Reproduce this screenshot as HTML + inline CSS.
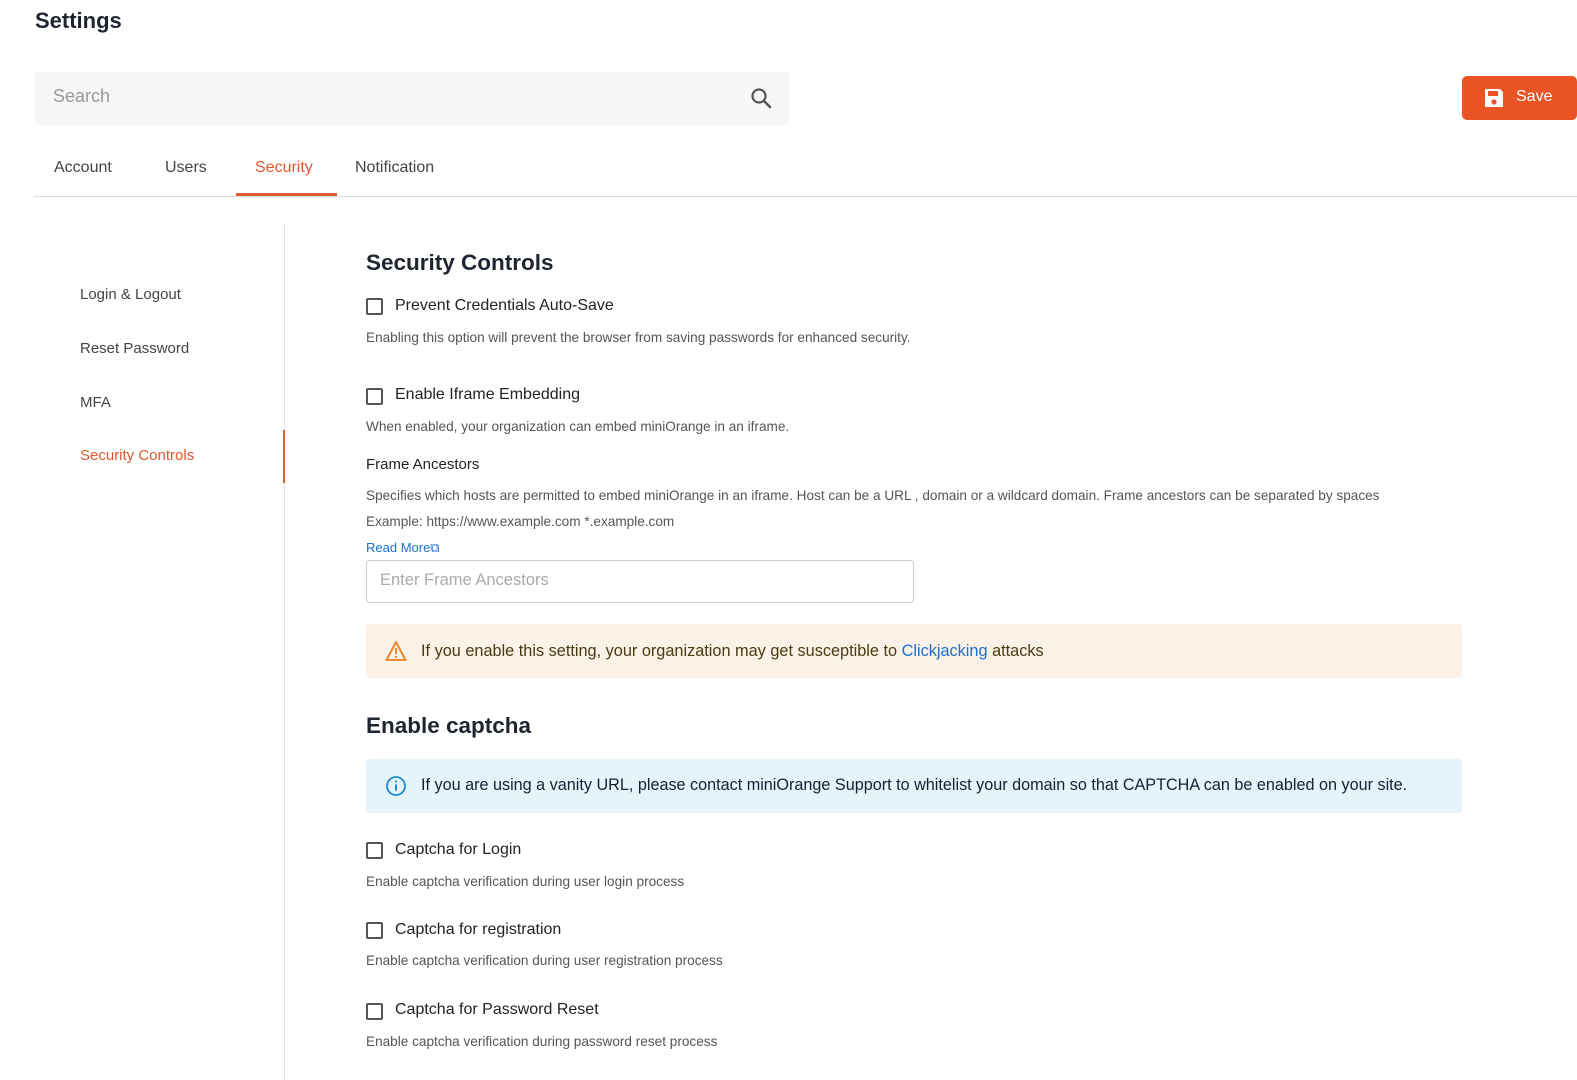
<!DOCTYPE html>
<html><head><meta charset="utf-8"><style>
*{box-sizing:border-box;margin:0;padding:0}
body{width:1577px;height:1080px;background:#fff;font-family:"Liberation Sans",sans-serif;color:#222;position:relative;overflow:hidden}
.a{position:absolute;white-space:nowrap}
.cb{position:absolute;width:17px;height:17px;border:2px solid #555;border-radius:2px;background:#fff}
.lbl{font-size:16px;color:#222}
.desc{font-size:13.6px;color:#555}
</style></head><body>
<div class="a" style="left:35px;top:8px;font-size:22px;font-weight:bold;color:#1e2430">Settings</div>
<div class="a" style="left:35px;top:72px;width:754px;height:53px;background:#f6f6f6;border-radius:4px"></div>
<div class="a" style="left:53px;top:86px;font-size:18px;color:#999">Search</div>
<svg class="a" style="left:749px;top:86px" width="24" height="24" viewBox="0 0 24 24"><circle cx="10" cy="10" r="6.5" fill="none" stroke="#555" stroke-width="2.2"/><path d="M15 15l6 6" stroke="#555" stroke-width="2.5" stroke-linecap="round"/></svg>
<div class="a" style="left:1462px;top:76px;width:115px;height:44px;background:#ea5424;border-radius:5px"></div>
<svg class="a" style="left:1482px;top:86px" width="24" height="24" viewBox="0 0 24 24"><path d="M3 3h15l3 3v15H3z" fill="#fff"/><rect x="6" y="5" width="10" height="5" fill="#ea5424"/><circle cx="12" cy="16" r="2.6" fill="#ea5424"/></svg>
<div class="a" style="left:1516px;top:88px;font-size:16px;color:#fff">Save</div>

<div class="a" style="left:54px;top:159px;font-size:16px;color:#444">Account</div>
<div class="a" style="left:165px;top:159px;font-size:16px;color:#444">Users</div>
<div class="a" style="left:255px;top:159px;font-size:16px;color:#e05a30">Security</div>
<div class="a" style="left:355px;top:159px;font-size:16px;color:#444">Notification</div>
<div class="a" style="left:34px;top:196px;width:1543px;height:1px;background:#ddd"></div>
<div class="a" style="left:236px;top:193px;width:101px;height:3px;background:#e05a30"></div>

<div class="a" style="left:284px;top:224px;width:1px;height:856px;background:#e2e2e2"></div>
<div class="a" style="left:283px;top:430px;width:2px;height:53px;background:#e05a30"></div>
<div class="a" style="left:80px;top:286px;font-size:15px;color:#444">Login &amp; Logout</div>
<div class="a" style="left:80px;top:340px;font-size:15px;color:#444">Reset Password</div>
<div class="a" style="left:80px;top:394px;font-size:15px;color:#444">MFA</div>
<div class="a" style="left:80px;top:447px;font-size:15px;color:#e05a30">Security Controls</div>

<div class="a" style="left:366px;top:250px;font-size:22.5px;font-weight:bold;color:#1e2430">Security Controls</div>
<div class="cb" style="left:366px;top:298px"></div>
<div class="a lbl" style="left:395px;top:297px">Prevent Credentials Auto-Save</div>
<div class="a desc" style="left:366px;top:330px">Enabling this option will prevent the browser from saving passwords for enhanced security.</div>
<div class="cb" style="left:366px;top:388px"></div>
<div class="a lbl" style="left:395px;top:386px">Enable Iframe Embedding</div>
<div class="a desc" style="left:366px;top:419px">When enabled, your organization can embed miniOrange in an iframe.</div>
<div class="a" style="left:366px;top:456px;font-size:15px;color:#222">Frame Ancestors</div>
<div class="a desc" style="left:366px;top:488px">Specifies which hosts are permitted to embed miniOrange in an iframe. Host can be a URL , domain or a wildcard domain. Frame ancestors can be separated by spaces</div>
<div class="a desc" style="left:366px;top:514px">Example: https://www.example.com *.example.com</div>
<div class="a" style="left:366px;top:540px;font-size:13px;color:#1a6fd1">Read More&#x29C9;</div>
<div class="a" style="left:366px;top:560px;width:548px;height:43px;border:1px solid #ccc;border-radius:4px"></div>
<div class="a" style="left:380px;top:571px;font-size:16.5px;color:#aaa">Enter Frame Ancestors</div>

<div class="a" style="left:366px;top:624px;width:1096px;height:54px;background:#fdf2e7;border-radius:3px"></div>
<svg class="a" style="left:385px;top:640px" width="22" height="22" viewBox="0 0 22 22"><path d="M11 2L20.5 20H1.5z" fill="none" stroke="#e88a2e" stroke-width="2" stroke-linejoin="round"/><path d="M11 8v6" stroke="#e88a2e" stroke-width="2"/><circle cx="11" cy="17" r="1.1" fill="#e88a2e"/></svg>
<div class="a" style="left:421px;top:642px;font-size:16.3px;color:#4a3a10">If you enable this setting, your organization may get susceptible to <span style="color:#1a6fd1">Clickjacking</span> attacks</div>

<div class="a" style="left:366px;top:713px;font-size:22.5px;font-weight:bold;color:#1e2430">Enable captcha</div>
<div class="a" style="left:366px;top:759px;width:1096px;height:54px;background:#e5f4fb;border-radius:3px"></div>
<svg class="a" style="left:385px;top:775px" width="22" height="22" viewBox="0 0 22 22"><circle cx="11" cy="11" r="9" fill="none" stroke="#1f8ad0" stroke-width="1.8"/><path d="M11 9.5v6" stroke="#1f8ad0" stroke-width="2"/><circle cx="11" cy="6.5" r="1.1" fill="#1f8ad0"/></svg>
<div class="a" style="left:421px;top:776px;font-size:16.2px;color:#123">If you are using a vanity URL, please contact miniOrange Support to whitelist your domain so that CAPTCHA can be enabled on your site.</div>

<div class="cb" style="left:366px;top:842px"></div>
<div class="a lbl" style="left:395px;top:841px">Captcha for Login</div>
<div class="a desc" style="left:366px;top:874px">Enable captcha verification during user login process</div>
<div class="cb" style="left:366px;top:922px"></div>
<div class="a lbl" style="left:395px;top:921px">Captcha for registration</div>
<div class="a desc" style="left:366px;top:953px">Enable captcha verification during user registration process</div>
<div class="cb" style="left:366px;top:1003px"></div>
<div class="a lbl" style="left:395px;top:1001px">Captcha for Password Reset</div>
<div class="a desc" style="left:366px;top:1034px">Enable captcha verification during password reset process</div>
</body></html>
